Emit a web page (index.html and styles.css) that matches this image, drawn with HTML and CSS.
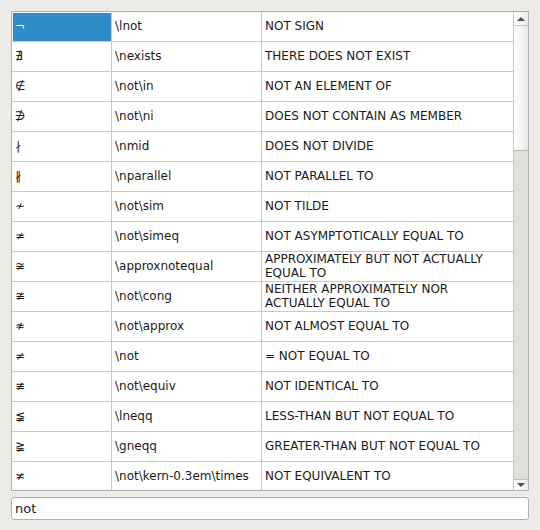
FILE: index.html
```html
<!DOCTYPE html>
<html>
<head>
<meta charset="utf-8">
<link rel="stylesheet" href="styles.css">
</head>
<body>
<div class="window">
  <div class="frame">
    <div class="viewport">
      <table class="grid">
        <colgroup><col class="c1"><col class="c2"><col class="c3"></colgroup>
        <tr><td class="sym selected">¬</td><td>\lnot</td><td>NOT SIGN</td></tr>
        <tr><td class="sym">∄</td><td>\nexists</td><td>THERE DOES NOT EXIST</td></tr>
        <tr><td class="sym">∉</td><td>\not\in</td><td>NOT AN ELEMENT OF</td></tr>
        <tr><td class="sym">∌</td><td>\not\ni</td><td>DOES NOT CONTAIN AS MEMBER</td></tr>
        <tr><td class="sym">∤</td><td>\nmid</td><td>DOES NOT DIVIDE</td></tr>
        <tr><td class="sym">∦</td><td>\nparallel</td><td>NOT PARALLEL TO</td></tr>
        <tr><td class="sym">≁</td><td>\not\sim</td><td>NOT TILDE</td></tr>
        <tr><td class="sym">≄</td><td>\not\simeq</td><td>NOT ASYMPTOTICALLY EQUAL TO</td></tr>
        <tr><td class="sym">≆</td><td>\approxnotequal</td><td class="two">APPROXIMATELY BUT NOT ACTUALLY EQUAL TO</td></tr>
        <tr><td class="sym">≇</td><td>\not\cong</td><td class="two">NEITHER APPROXIMATELY NOR ACTUALLY EQUAL TO</td></tr>
        <tr><td class="sym">≉</td><td>\not\approx</td><td>NOT ALMOST EQUAL TO</td></tr>
        <tr><td class="sym">≠</td><td>\not</td><td>= NOT EQUAL TO</td></tr>
        <tr><td class="sym">≢</td><td>\not\equiv</td><td>NOT IDENTICAL TO</td></tr>
        <tr><td class="sym">≨</td><td>\lneqq</td><td>LESS-THAN BUT NOT EQUAL TO</td></tr>
        <tr><td class="sym">≩</td><td>\gneqq</td><td>GREATER-THAN BUT NOT EQUAL TO</td></tr>
        <tr><td class="sym">≭</td><td>\not\kern-0.3em\times</td><td>NOT EQUIVALENT TO</td></tr>
      </table>
    </div>
    <div class="scrollbar">
      <div class="btn up"><span class="tri-up"></span></div>
      <div class="thumb"></div>
      <div class="track"></div>
      <div class="btn down"><span class="tri-down"></span></div>
    </div>
  </div>
  <div class="search">not</div>
</div>
</body>
</html>
```

FILE: styles.css
```css
html, body {
  margin: 0;
  padding: 0;
  background: #edebe7;
  width: 540px;
  height: 530px;
  overflow: hidden;
}
.window {
  padding: 11px 0 0 11px;
  font-family: "DejaVu Sans", sans-serif;
  font-size: 12px;
  color: #1a1a1a;
}
.frame {
  width: 516px;
  height: 478px;
  border: 1px solid #b3b0ab;
  background: #fff;
  display: flex;
  overflow: hidden;
}
.viewport {
  width: 502px;
  height: 478px;
  overflow: hidden;
}
.grid {
  border-collapse: separate;
  border-spacing: 0;
  table-layout: fixed;
  width: 502px;
}
.c1 { width: 100px; }
.c2 { width: 150px; }
.c3 { width: 252px; }
.grid td {
  padding: 0 3px 2px 3px;
  box-sizing: border-box;
  height: 30px;
  border-right: 1px solid #c8c8c8;
  border-bottom: 1px solid #c8c8c8;
  line-height: 14px;
  vertical-align: middle;
  white-space: normal;
  overflow: hidden;
}
.grid td.two {
  padding: 0 3px 1px 3px;
}
.grid td.sym {
  font-size: 12px;
}
.grid td.selected {
  background: #308cc6;
  color: #fff;
  box-shadow: inset 1px 1px 0 #fff;
}
.scrollbar {
  width: 14px;
  height: 478px;
  display: flex;
  flex-direction: column;
  background: #e0dedb;
}
.btn {
  box-sizing: border-box;
  display: flex;
  align-items: center;
  justify-content: center;
  background: linear-gradient(to right, #ffffff, #ececea);
}
.btn.up {
  height: 14px;
  border-bottom: 1px solid #c2bfba;
}
.btn.down {
  height: 11px;
  border-top: 1px solid #c2bfba;
  margin-top: auto;
}
.thumb {
  height: 125px;
  box-sizing: border-box;
  border-bottom: 1px solid #b8b5b0;
  background: linear-gradient(to right, #ffffff 0%, #f6f5f3 50%, #e9e7e4 100%);
}
.track {
  flex: 1;
  background: #e1dfdc;
}
.tri-up {
  width: 0;
  height: 0;
  border-left: 4px solid transparent;
  border-right: 4px solid transparent;
  border-bottom: 4px solid #4f4f4f;
}
.tri-down {
  width: 0;
  height: 0;
  border-left: 4px solid transparent;
  border-right: 4px solid transparent;
  border-top: 4px solid #4f4f4f;
}
.search {
  margin-top: 6px;
  width: 518px;
  height: 23px;
  box-sizing: border-box;
  border: 1px solid #b3b0ab;
  border-radius: 3px;
  background: #fff;
  padding: 0 3px;
  line-height: 21px;
  font-size: 13px;
  color: #1a1a1a;
}
```
